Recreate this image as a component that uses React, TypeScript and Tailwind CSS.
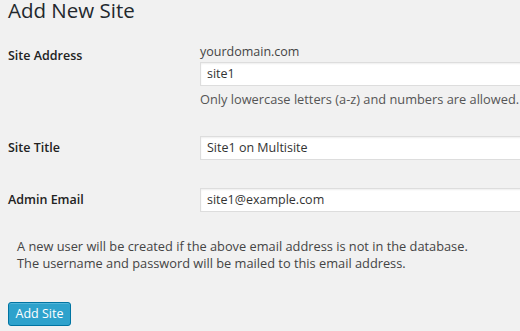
export default function App() {
  const font = { fontFamily: '"Open Sans", "Noto Sans", sans-serif' };
  const input =
    "h-[24px] w-[360px] shrink-0 bg-white border border-[#ddd] shadow-[inset_0_1px_2px_rgba(0,0,0,0.07)] px-[6px] flex items-center text-[12.5px] text-[#333]";
  const label = "w-[192px] shrink-0 font-semibold text-[12.5px] leading-[18px] text-[#222]";
  return (
    <div
      className="w-[520px] h-[331px] overflow-hidden bg-[#f1f1f1] text-[#444] pl-2"
      style={font}
    >
      <h1 className="text-[20.5px] leading-[20px] font-normal text-[#23282d]">
        Add New Site
      </h1>

      {/* Site Address */}
      <div className="mt-[20px] flex text-[12.5px]">
        <div className={`${label} pt-[7px]`}>Site Address</div>
        <div className="pt-[3px]">
          <div className="leading-[18px]">yourdomain.com</div>
          <div className={`mt-[1px] ${input}`}>site1</div>
          <div className="mt-[4px] text-[12.8px] leading-[18px] text-[#555] whitespace-nowrap">
            Only lowercase letters (a-z) and numbers are allowed.
          </div>
        </div>
      </div>

      {/* Site Title */}
      <div className="mt-[28px] flex items-center">
        <div className={label}>Site Title</div>
        <div className={input}>Site1 on Multisite</div>
      </div>

      {/* Admin Email */}
      <div className="mt-[28px] flex items-center">
        <div className={label}>Admin Email</div>
        <div className={input}>site1@example.com</div>
      </div>

      <div className="mt-[26px] ml-[9px] text-[12.8px] leading-[17px] text-[#444]">
        <p>A new user will be created if the above email address is not in the database.</p>
        <p>The username and password will be mailed to this email address.</p>
      </div>

      <button className="mt-[30px] h-[24px] w-[63px] rounded-[3px] bg-[#2ea2cc] border border-[#0074a2] text-white text-[12.5px] leading-[22px] shadow-[inset_0_1px_0_rgba(120,200,230,0.5)]">
        Add Site
      </button>
    </div>
  );
}
